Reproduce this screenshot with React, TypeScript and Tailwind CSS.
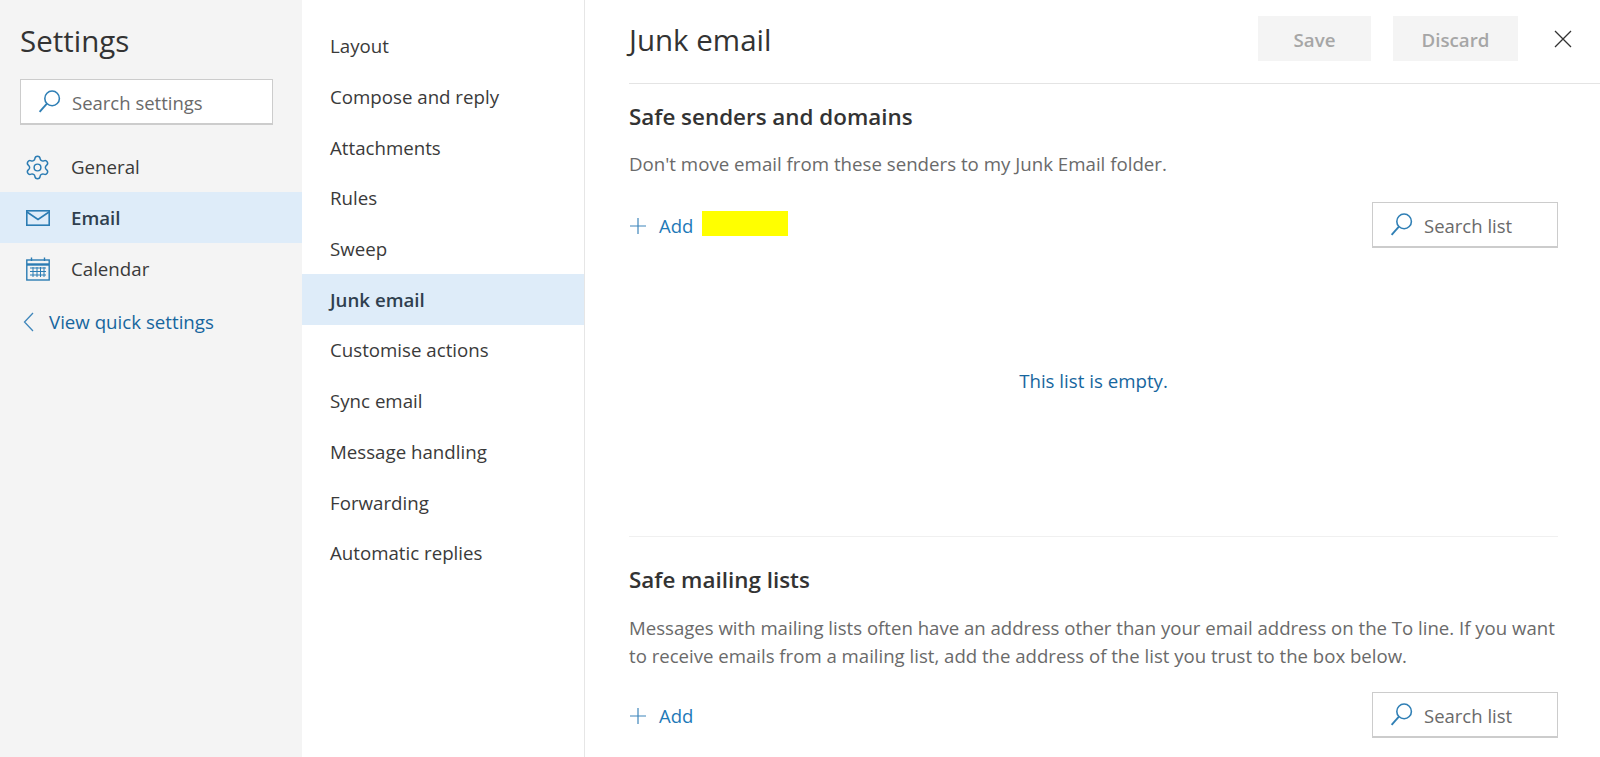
import React from "react";
import { Settings } from "lucide-react";

const Search = ({ className = "" }: { className?: string }) => (
  <svg viewBox="0 0 24 24" className={className} fill="none" stroke="#2f7fb5" strokeWidth="1.5">
    <circle cx="14.5" cy="9" r="7" />
    <path d="M9.5 14 L2.5 22" strokeWidth="1.8" />
  </svg>
);

const SearchBox = ({ label, w }: { label: string; w: string }) => (
  <div className={`${w} h-[46px] flex items-center bg-white border border-[#cccccc] border-b-2 pl-[16px] gap-[10px] text-[#6a6a6a] text-[18.5px]`}>
    <Search className="w-[25px] h-[25px] shrink-0" />
    <span className="pt-[2px]">{label}</span>
  </div>
);

const AddBtn = () => (
  <div className="flex items-center text-[#1f7ab8] text-[18.5px] pt-[2px]">
    <svg viewBox="0 0 18 18" className="w-[18px] h-[18px] mr-[12px]" fill="none" stroke="#3f86bb" strokeWidth="1.2">
      <path d="M9 1V17M1 9H17" />
    </svg>
    <span>Add</span>
  </div>
);

const middle = ["Layout", "Compose and reply", "Attachments", "Rules", "Sweep", "Junk email", "Customise actions", "Sync email", "Message handling", "Forwarding", "Automatic replies"];

export default function App() {
  return (
    <div className="w-[1600px] h-[757px] flex overflow-hidden bg-white text-[#3a3a3a] text-[18.7px]" style={{ fontFamily: '"Open Sans", "Noto Sans", sans-serif' }}>
      <aside className="w-[302px] shrink-0 bg-[#f4f4f4] flex flex-col">
        <h1 className="mt-[21px] ml-[20px] h-[40px] leading-[40px] text-[29.5px] font-medium text-[#333]">Settings</h1>
        <div className="mt-[18px] ml-[20px]">
          <SearchBox label="Search settings" w="w-[253px]" />
        </div>
        <nav className="mt-[17px] flex flex-col">
          <div className="h-[50px] flex items-center pl-[24px]">
            <Settings className="w-[27px] h-[27px] text-[#2b7cb3]" strokeWidth={1.3} />
            <span className="ml-[20px]">General</span>
          </div>
          <div className="h-[51px] flex items-center pl-[26px] bg-[#deecf9] font-semibold">
            <svg viewBox="0 0 24 16" className="w-[24px] h-[16px]" fill="none" stroke="#2b7cb3" strokeWidth="1.6">
              <rect x="0.8" y="0.8" width="22.4" height="14.4" />
              <path d="M1 2 L12 9.5 L23 2" />
            </svg>
            <span className="ml-[21px] pt-[2px] text-[#2f3f4f]">Email</span>
          </div>
          <div className="h-[51px] flex items-center pl-[26px]">
            <svg viewBox="0 0 24 24" className="w-[24px] h-[24px]" fill="none" stroke="#2b7cb3" strokeWidth="1.4">
              <rect x="0.8" y="3" width="22.4" height="20" />
              <path d="M1 7.5H23" strokeWidth="2.4" />
              <path d="M5.5 0.5V4M18.5 0.5V4" />
              <path d="M4 11H20M4 14.5H20M4 18H20M7 10V20M11 10V20M14.5 10V20M18 10V20" strokeWidth="1" />
            </svg>
            <span className="ml-[21px] pt-[2px]">Calendar</span>
          </div>
          <div className="h-[55px] flex items-center pl-[23px] text-[#17669e]">
            <svg viewBox="0 0 11 20" className="w-[11px] h-[20px]" fill="none" stroke="#3f86bb" strokeWidth="1.3">
              <path d="M10 1 L1.5 10 L10 19" />
            </svg>
            <span className="ml-[15px] pt-[2px]">View quick settings</span>
          </div>
        </nav>
      </aside>

      <div className="w-[283px] shrink-0 border-r border-[#e6e6e6] pt-[21px] flex flex-col">
        {middle.map((m) => (
          <div key={m} className={`h-[50.7px] shrink-0 flex items-center pl-[28px] ${m === "Junk email" ? "bg-[#deecf9] font-semibold text-[#2f3f4f]" : ""}`}>
            {m}
          </div>
        ))}
      </div>

      <main className="flex-1 min-w-0 pl-[44px] pr-[42px] flex flex-col">
        <header className="h-[84px] shrink-0 border-b border-[#e4e4e4] flex items-start -mr-[42px] pr-[28px]">
          <h2 className="mt-[20px] h-[40px] leading-[40px] text-[29.5px] font-medium text-[#333]">Junk email</h2>
          <div className="ml-auto mt-[16px] flex items-center">
            <div className="w-[113px] h-[45px] bg-[#f4f4f4] flex items-center justify-center text-[#a6a6a6] font-semibold pt-[3px]">Save</div>
            <div className="w-[125px] h-[45px] ml-[22px] bg-[#f4f4f4] flex items-center justify-center text-[#a6a6a6] font-semibold pt-[3px]">Discard</div>
            <svg viewBox="0 0 18 18" className="w-[18px] h-[18px] ml-[36px]" fill="none" stroke="#333" strokeWidth="1.3">
              <path d="M1 1L17 17M17 1L1 17" />
            </svg>
          </div>
        </header>

        <section className="h-[453px] shrink-0 border-b border-[#f0f0f0] flex flex-col">
          <h3 className="mt-[18px] h-[30px] leading-[30px] text-[22.4px] font-semibold text-[#333]">Safe senders and domains</h3>
          <p className="mt-[18px] h-[28px] leading-[28px] text-[#6a6a6a]">Don't move email from these senders to my Junk Email folder.</p>
          <div className="mt-[24px] flex items-center justify-between">
            <div className="flex items-center">
              <AddBtn />
              <div className="ml-[9px] w-[86px] h-[25px] bg-[#ffff00] -translate-y-[2px]" />
            </div>
            <SearchBox label="Search list" w="w-[186px]" />
          </div>
          <div className="flex-1 flex items-start justify-center pt-[119px] text-[#17669e]">This list is empty.</div>
        </section>

        <section className="flex flex-col">
          <h3 className="mt-[28px] h-[30px] leading-[30px] text-[22.4px] font-semibold text-[#333]">Safe mailing lists</h3>
          <p className="mt-[19px] leading-[27.5px] text-[18.6px] text-[#6a6a6a]">
            Messages with mailing lists often have an address other than your email address on the To line. If you want to receive emails from a mailing list, add the address of the list you trust to the box below.
          </p>
          <div className="mt-[23px] flex items-center justify-between">
            <AddBtn />
            <SearchBox label="Search list" w="w-[186px]" />
          </div>
        </section>
      </main>
    </div>
  );
}
